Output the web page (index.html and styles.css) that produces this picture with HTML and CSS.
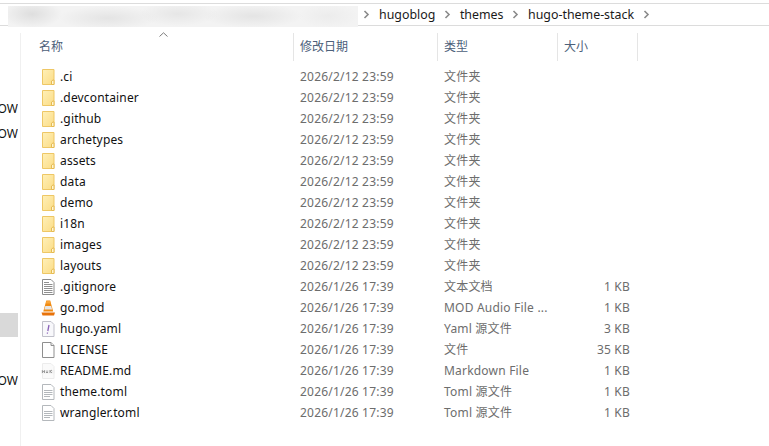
FILE: index.html
```html
<!DOCTYPE html>
<html lang="zh-CN">
  <head>
    <meta charset="UTF-8" />
    <meta name="viewport" content="width=device-width, initial-scale=1.0" />
    <title>hugo-theme-stack</title>
    <link rel="stylesheet" href="styles.css">
  </head>
  <body>
    <svg class="icon-defs" width="0" height="0">
      <defs>
        <linearGradient id="folderFill" x1="0" y1="0" x2="1" y2="1">
          <stop offset="0" stop-color="#fff0b8" />
          <stop offset="1" stop-color="#fbdc85" />
        </linearGradient>
        <symbol id="chev" viewBox="0 0 7 9">
          <path d="M1.500 1 5 4.500 1.500 8" fill="none" stroke="#8a8a8a" stroke-width="1.600" />
        </symbol>
        <symbol id="folder" viewBox="0 0 16 16">
          <path d="M2.500 .5h11.500v15H2.500z" fill="url(#folderFill)" stroke="#eec765" />
          <path d="M11.500 15.500v-3.500l1.500-1h1v4.500z" fill="#fff6d2" stroke="#e6bb52" />
        </symbol>
        <symbol id="textdoc" viewBox="0 0 16 16">
          <path d="M2.500 .5h8.500l3 3v12H2.500z" fill="#fff" stroke="#8c8c8c" />
          <path d="M4 3.500h5M4 5.500h8.500M4 7.500h8.500M4 9.500h8.500M4 11.500h8.500M4 13.500h8.500" stroke="#8f8f8f" />
        </symbol>
        <symbol id="vlc" viewBox="0 0 16 16">
          <path d="M6.300 .5h3.900l3 11H3.300z" fill="#f08a12" />
          <path d="M5.300 6h5.900l.9 3.400H4.400z" fill="#e6e6e6" />
          <path d="M6.500 1h3.500l.6 2.600H5.900z" fill="#f9a53a" />
          <path d="M1.500 12.500h13.500l-1 3h-11.500z" fill="#e8730a" />
        </symbol>
        <symbol id="yaml" viewBox="0 0 16 16">
          <path d="M2.500 .5h8.500l3 3v12H2.500z" fill="#f8f8fb" stroke="#c0c0ca" />
          <path d="M9 4 7.800 10M7.500 11.500l-.2 1.200" fill="none" stroke="#8a62b8" stroke-width="1.300" />
        </symbol>
        <symbol id="blank" viewBox="0 0 16 16">
          <path d="M2.500 .5h8.500l3 3v12H2.500z" fill="#fff" stroke="#8f8f8f" />
          <path d="M11 .5v3h3" fill="#eee" stroke="#8f8f8f" />
        </symbol>
        <symbol id="markdown" viewBox="0 0 16 16">
          <path d="M2.500 .5h8.500l3 3v12H2.500z" fill="#fafafa" stroke="#ececec" />
          <path d="M1 7h14v3.500H1z" fill="#f0f0f0" />
          <path d="M2.500 10V7.500l1 1.300 1-1.300V10M7 7.500v2.500M6 9l1 1 1-1M10 7v3M10 8.500l2-1.500M10.500 8.500l1.500 1.500" fill="none" stroke="#888" stroke-width=".8" />
        </symbol>
        <symbol id="plain" viewBox="0 0 16 16">
          <path d="M2.500 .5h8.500l3 3v12H2.500z" fill="#fff" stroke="#b4b8bc" />
          <path d="M4 6.500h8.500M4 8.500h8.500M4 10.500h8.500M4 12.500h6" stroke="#b4b8bc" />
        </symbol>
      </defs>
    </svg>

    <div class="pathbar">
      <div class="path-blur"></div>
      <svg class="chev"><use href="#chev" /></svg>
      <span class="crumb">hugoblog</span>
      <svg class="chev"><use href="#chev" /></svg>
      <span class="crumb">themes</span>
      <svg class="chev"><use href="#chev" /></svg>
      <span class="crumb">hugo-theme-stack</span>
      <svg class="chev"><use href="#chev" /></svg>
    </div>

    <div class="main">
      <nav class="sidebar">
        <div class="nav-item first">OW</div>
        <div class="nav-item">OW</div>
        <div class="nav-item selected"></div>
        <div class="nav-item last">OW</div>
      </nav>

      <section class="files">
        <svg class="sort-caret" width="9" height="5" viewBox="0 0 9 5">
          <path d="M.5 4.500 4.500 .8l4 3.700" fill="none" stroke="#7c7c7c" />
        </svg>
        <div class="head">
          <div class="head-cell name">名称</div>
          <div class="head-cell">修改日期</div>
          <div class="head-cell">类型</div>
          <div class="head-cell">大小</div>
        </div>
        <div class="rows" id="rows"></div>
      </section>
    </div>

    <script>
      const D1 = "2026/2/12 23:59";
      const D2 = "2026/1/26 17:39";
      const files = [
        ["folder", ".ci", D1, "文件夹", ""],
        ["folder", ".devcontainer", D1, "文件夹", ""],
        ["folder", ".github", D1, "文件夹", ""],
        ["folder", "archetypes", D1, "文件夹", ""],
        ["folder", "assets", D1, "文件夹", ""],
        ["folder", "data", D1, "文件夹", ""],
        ["folder", "demo", D1, "文件夹", ""],
        ["folder", "i18n", D1, "文件夹", ""],
        ["folder", "images", D1, "文件夹", ""],
        ["folder", "layouts", D1, "文件夹", ""],
        ["textdoc", ".gitignore", D2, "文本文档", "1 KB"],
        ["vlc", "go.mod", D2, "MOD Audio File ...", "1 KB"],
        ["yaml", "hugo.yaml", D2, "Yaml 源文件", "3 KB"],
        ["blank", "LICENSE", D2, "文件", "35 KB"],
        ["markdown", "README.md", D2, "Markdown File", "1 KB"],
        ["plain", "theme.toml", D2, "Toml 源文件", "1 KB"],
        ["plain", "wrangler.toml", D2, "Toml 源文件", "1 KB"],
      ];

      function createRow(f) {
        return `
        <div class="row">
          <div class="cell name"><svg class="file-icon"><use href="#${f[0]}" /></svg>${f[1]}</div>
          <div class="cell date">${f[2]}</div>
          <div class="cell type">${f[3]}</div>
          <div class="cell size">${f[4]}</div>
        </div>`;
      }

      document.getElementById("rows").innerHTML = files.map(createRow).join("");
    </script>
  </body>
</html>
```

FILE: styles.css
```css
body {
  margin: 0;
  background: white;
  font-family: "Noto Sans", "Noto Sans CJK SC", sans-serif;
  font-size: 12px;
  height: 446px;
  overflow: hidden;
}
.icon-defs {
  position: absolute;
}
.pathbar {
  position: relative;
  margin-top: 3px;
  height: 21px;
  border-top: 1px solid #dcdcdc;
  border-bottom: 1px solid #dcdcdc;
  display: flex;
  align-items: center;
  padding-left: 363px;
  color: #1a1a1a;
  font-size: 12.4px;
}
.path-blur {
  position: absolute;
  left: 8px;
  top: 2px;
  width: 350px;
  height: 21px;
  background:
    radial-gradient(ellipse 30px 14px at 24px 8px, #dedede, transparent),
    radial-gradient(ellipse 50px 12px at 100px 12px, #e4e4e4, transparent),
    radial-gradient(ellipse 40px 12px at 170px 8px, #e6e6e6, transparent),
    radial-gradient(ellipse 50px 12px at 245px 10px, #e4e4e4, transparent),
    radial-gradient(ellipse 30px 12px at 320px 10px, #ececec, transparent),
    #f3f3f3;
}
.chev {
  width: 7px;
  height: 9px;
}
.crumb {
  margin: 0 8.5px 0 9px;
}
.main {
  display: flex;
}
.sidebar {
  width: 20px;
  height: 420px;
  border-right: 1px solid #f0f0f0;
  margin-top: 7px;
  display: flex;
  flex-direction: column;
}
.nav-item {
  height: 25px;
  line-height: 25px;
  width: 18px;
  overflow: hidden;
  display: flex;
  justify-content: flex-end;
  color: #111;
}
.nav-item.first {
  margin-top: 63px;
}
.nav-item.selected {
  margin-top: 167px;
  height: 24px;
  background: #d9d9d9;
}
.nav-item.last {
  margin-top: 31px;
}
.files {
  position: relative;
  padding-top: 7px;
}
.sort-caret {
  position: absolute;
  left: 138px;
  top: 6px;
}
.head {
  display: grid;
  grid-template-columns: 273px 144px 120px 80px;
  height: 27px;
  margin-bottom: 6px;
}
.head-cell {
  box-sizing: border-box;
  border-right: 1px solid #e5e5e5;
  padding-left: 6px;
  line-height: 28px;
  color: #4c607a;
}
.head-cell.name {
  padding-left: 18px;
}
.row {
  display: grid;
  grid-template-columns: 273px 144px 120px 72px;
  height: 21px;
  line-height: 21px;
}
.cell {
  padding-left: 6px;
  white-space: nowrap;
  color: #6d6d6d;
  letter-spacing: 0.2px;
}
.cell.name {
  display: flex;
  align-items: center;
  padding-left: 19px;
  gap: 4px;
  color: #111;
  letter-spacing: 0.15px;
}
.cell.size {
  padding-left: 0;
  text-align: right;
}
.file-icon {
  width: 16px;
  height: 16px;
  flex: none;
}
```
